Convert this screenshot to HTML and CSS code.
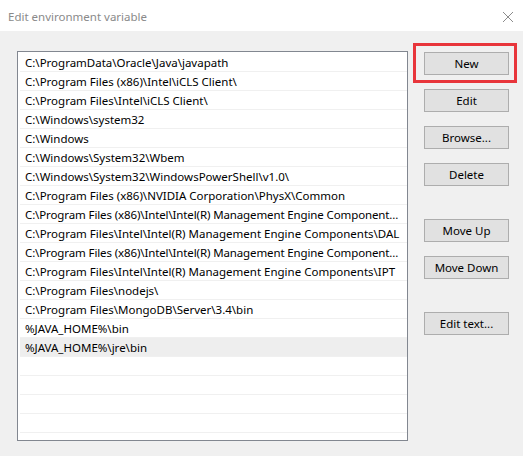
FILE: index.html
```html
<!DOCTYPE html>
<html>
<head>
<meta charset="utf-8">
<link rel="stylesheet" href="styles.css">
</head>
<body>
<div class="dialog">
  <div class="titlebar">
    <span class="title">Edit environment variable</span>
    <svg class="close" width="12" height="12" viewBox="0 0 12 12"><path d="M1 1 L11 11 M11 1 L1 11" stroke="#8c8c8c" stroke-width="1" fill="none"/></svg>
  </div>
  <div class="content">
    <div class="listbox">
      <div class="list">
        <div class="row">C:\ProgramData\Oracle\Java\javapath</div>
        <div class="row">C:\Program Files (x86)\Intel\iCLS Client\</div>
        <div class="row">C:\Program Files\Intel\iCLS Client\</div>
        <div class="row">C:\Windows\system32</div>
        <div class="row">C:\Windows</div>
        <div class="row">C:\Windows\System32\Wbem</div>
        <div class="row">C:\Windows\System32\WindowsPowerShell\v1.0\</div>
        <div class="row">C:\Program Files (x86)\NVIDIA Corporation\PhysX\Common</div>
        <div class="row tight">C:\Program Files (x86)\Intel\Intel(R) Management Engine Component...</div>
        <div class="row">C:\Program Files\Intel\Intel(R) Management Engine Components\DAL</div>
        <div class="row tight">C:\Program Files (x86)\Intel\Intel(R) Management Engine Component...</div>
        <div class="row">C:\Program Files\Intel\Intel(R) Management Engine Components\IPT</div>
        <div class="row">C:\Program Files\nodejs\</div>
        <div class="row">C:\Program Files\MongoDB\Server\3.4\bin</div>
        <div class="row">%JAVA_HOME%\bin</div>
        <div class="row selected">%JAVA_HOME%\jre\bin</div>
        <div class="row"></div>
        <div class="row"></div>
        <div class="row"></div>
        <div class="row"></div>
        <div class="row"></div>
      </div>
    </div>
    <div class="buttons">
      <div class="btn-wrap highlight">
        <button class="btn">New</button>
        <span class="frame"></span>
      </div>
      <button class="btn">Edit</button>
      <button class="btn">Browse...</button>
      <button class="btn">Delete</button>
      <button class="btn spaced">Move Up</button>
      <button class="btn">Move Down</button>
      <button class="btn spaced">Edit text...</button>
    </div>
  </div>
</div>
</body>
</html>
```

FILE: styles.css
```css
html, body {
  margin: 0;
  padding: 0;
  background: #f0f0f0;
}
body {
  font-family: "Noto Sans", "Liberation Sans", sans-serif;
  font-size: 11.5px;
  color: #000;
  width: 523px;
  height: 456px;
  overflow: hidden;
}
.dialog {
  width: 523px;
  height: 456px;
  display: flex;
  flex-direction: column;
}
.titlebar {
  height: 31px;
  background: #ffffff;
  display: flex;
  align-items: center;
  justify-content: space-between;
  padding: 0 9px 0 8px;
  flex: none;
}
.title {
  color: #8a8a8a;
  font-size: 11.5px;
  position: relative;
  top: 1px;
}
.close {
  display: block;
  margin-top: 2px;
}
.content {
  flex: 1;
  display: flex;
  padding: 20px 0 0 17px;
  align-items: flex-start;
}
.listbox {
  width: 389px;
  height: 388px;
  border: 1px solid #828790;
  background: #ffffff;
  overflow: hidden;
  flex: none;
}
.list {
  padding: 1px 0 0 2px;
}
.row {
  height: 18px;
  line-height: 19px;
  border-bottom: 1px solid #f0f0f0;
  padding-left: 5px;
  padding-right: 1px;
  white-space: nowrap;
  overflow: hidden;
  text-overflow: ellipsis;
}
.row.tight {
  letter-spacing: -0.12px;
}
.row.selected {
  background: #eeeeee;
}
.buttons {
  margin-left: 16px;
  padding-top: 1px;
  display: flex;
  flex-direction: column;
  gap: 14px;
  width: 85px;
}
.btn-wrap {
  position: relative;
  height: 23px;
}
.btn {
  width: 85px;
  height: 23px;
  margin: 0;
  padding: 0;
  background: #e1e1e1;
  border: 1px solid #adadad;
  border-radius: 0;
  font-family: "Noto Sans", "Liberation Sans", sans-serif;
  font-size: 11.5px;
  color: #000;
  line-height: 20px;
  display: block;
}
.btn.spaced {
  margin-top: 19px;
}
.frame {
  position: absolute;
  left: -11px;
  top: -9px;
  width: 98px;
  height: 34px;
  border: 3px solid #e8353b;
  pointer-events: none;
}
```
